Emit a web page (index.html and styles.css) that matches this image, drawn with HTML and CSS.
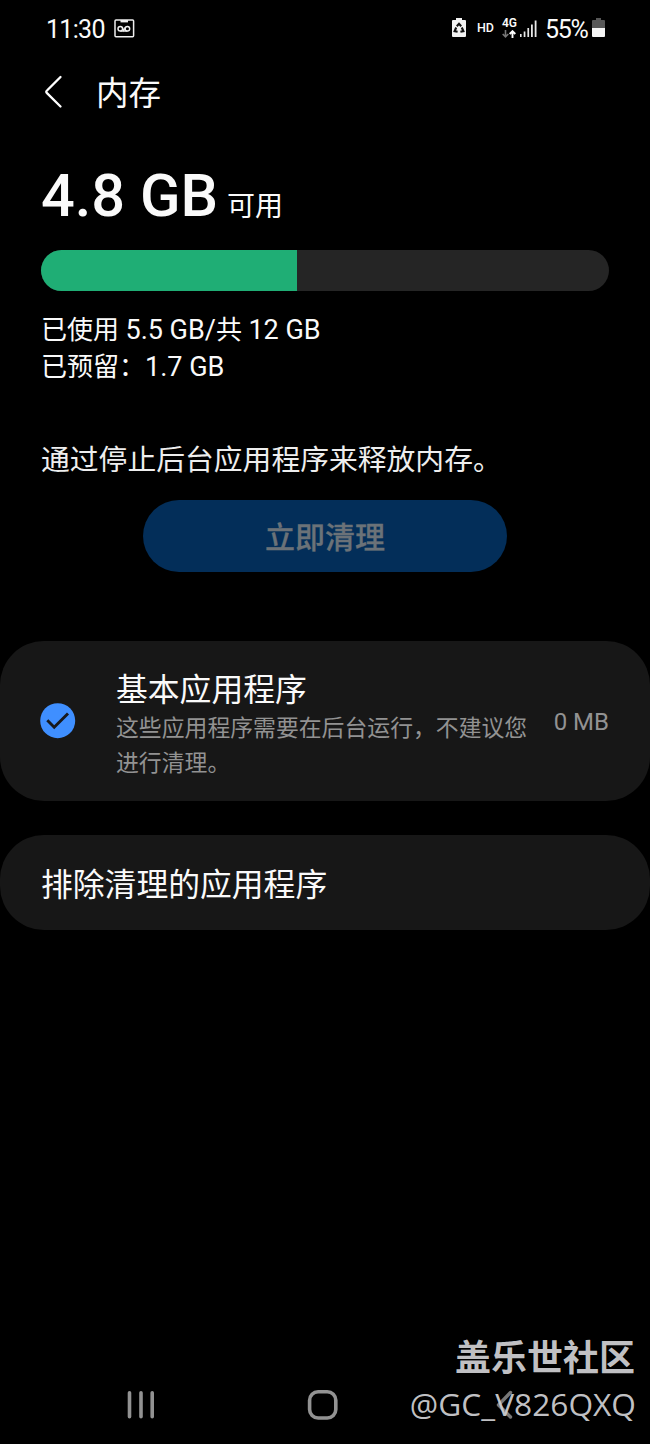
FILE: index.html
```html
<!DOCTYPE html>
<html lang="zh-CN">
<head>
<meta charset="utf-8">
<title>内存</title>
<link rel="stylesheet" href="styles.css">
</head>
<body>
<div class="screen">
  <header class="status">
    <div class="status-left">
      <span class="clock">11:30</span>
      <svg class="voicemail" width="22" height="20" viewBox="0 0 22 20" fill="none" stroke="#eee" stroke-width="1.5">
        <rect x="1" y="1" width="18.6" height="16.8" rx="1"/>
        <path d="M6.500 2.200h7.500" stroke-width="2.400"/>
        <circle cx="6.300" cy="9.800" r="2.300"/><circle cx="13.400" cy="9.800" r="2.300"/>
        <path d="M6.300 12.100h7.100M8.300 8.200l1.500 3.500 1.500-3.500" stroke-width="1.200"/>
      </svg>
    </div>
    <div class="status-right">
      <svg class="recycle" width="14" height="20" viewBox="0 0 14 20">
        <path d="M4 0h6v2h3q1 0 1 1v15q0 1-1 1H1q-1 0-1-1V3q0-1 1-1h3z" fill="#f2f2f2"/>
        <path d="M4.800 8.300 7 5.800l2.200 2.500M9.800 9.500l1.600 3.800-3 .5M5.600 13.800l-3-.5 1.600-3.800" fill="none" stroke="#111" stroke-width="2.100"/>
      </svg>
      <span class="hd">HD</span>
      <span class="network">
        <span class="gen">4G</span>
        <svg width="14" height="8" viewBox="0 0 14 8" fill="none" stroke-width="1.6">
          <path d="M3.5 0v7M.7 4l2.8 2.8L6.3 4" stroke="#777"/>
          <path d="M10.5 8V1M7.7 4l2.8-2.8L13.3 4" stroke="#fff" stroke-width="1.9"/>
        </svg>
      </span>
      <svg class="signal" width="17" height="18" viewBox="0 0 17 18" fill="#e8e8e8">
        <path d="M0 14h1.6v3H0zM3.7 11.5h1.7V17H3.7zM7.4 8h1.7v9H7.4zM11 4.5h1.8V17H11zM14.7.5h1.8V17h-1.8z"/>
      </svg>
      <span class="percent">55%</span>
      <svg class="battery" width="13" height="20" viewBox="0 0 13 20">
        <path d="M4 0h5v2h3q1 0 1 1v7H0V3q0-1 1-1h3z" fill="#575757"/>
        <path d="M0 10h13v8q0 1-1 1H1q-1 0-1-1z" fill="#f4f4f4"/>
      </svg>
    </div>
  </header>

  <nav class="titlebar">
    <svg width="20" height="34" viewBox="0 0 20 34" fill="none" stroke="#fff" stroke-width="2.3" stroke-linecap="round" stroke-linejoin="round">
      <path d="M16.500 2 3 15.500q-1.500 1.300 0 2.600l13.500 13.400"/>
    </svg>
    <h1 class="title">内存</h1>
  </nav>

  <main class="content">
    <section class="memory">
      <div class="available"><span class="amount">4.8 GB</span><span class="unit-label">可用</span></div>
      <div class="bar"><div class="bar-fill" style="width:45%"></div></div>
      <p class="usage">已使用 <span class="num">5.5 GB/</span>共 <span class="num">12 GB</span></p>
      <p class="usage">已预留：<span class="num">1.7 GB</span></p>
      <p class="hint">通过停止后台应用程序来释放内存。</p>
      <button class="clean" disabled>立即清理</button>
    </section>

    <section class="card apps">
      <svg class="check" width="36" height="36" viewBox="0 0 36 36">
        <circle cx="17.700" cy="17.700" r="17.500" fill="#3f8fff"/>
        <path d="m7.300 17.300 6.900 6.900L28 10.500" fill="none" stroke="#17191d" stroke-width="2.900"/>
      </svg>
      <div class="apps-text">
        <h2 class="card-title">基本应用程序</h2>
        <p class="card-sub">这些应用程序需要在后台运行，不建议您进行清理。</p>
      </div>
      <span class="size">0 MB</span>
    </section>

    <section class="card excluded">
      <h2 class="card-title">排除清理的应用程序</h2>
    </section>
  </main>

  <footer class="navbar">
    <svg width="28" height="30" viewBox="0 0 28 30" stroke="#929292" stroke-width="3.600" stroke-linecap="round">
      <path d="M2.500 2.700v24M14 2.700v24M25.200 2.700v24"/>
    </svg>
    <svg class="home" width="32" height="32" viewBox="0 0 32 32" fill="none" stroke="#929292" stroke-width="3.600">
      <rect x="2.600" y="1.800" width="26.200" height="26.200" rx="8.500"/>
    </svg>
    <svg width="18" height="30" viewBox="0 0 18 30" fill="none" stroke="#777" stroke-width="3.400" stroke-linecap="round" stroke-linejoin="round">
      <path d="M14.500 2.500 2.500 15l12 12"/>
    </svg>
  </footer>
  <div class="watermark">
    <div class="mark-name">盖乐世社区</div>
    <div class="mark-user">@GC_V826QXQ</div>
  </div>
</div>
</body>
</html>
```
FILE: styles.css
```css
* { box-sizing: border-box; }
body { margin: 0; background: #000; }
h1, h2, p { margin: 0; font-weight: 400; }
svg { display: block; flex: none; }

.screen {
  position: relative;
  display: flex;
  flex-direction: column;
  width: 650px;
  height: 1444px;
  overflow: hidden;
  color: #fafafa;
  background: #000;
  font-family: Roboto, "Noto Sans CJK SC", sans-serif;
  white-space: nowrap;
}

.status {
  display: flex;
  justify-content: space-between;
  height: 56px;
  padding: 14px 45px 0 46px;
  line-height: 32px;
}
.status-left, .status-right { display: flex; align-items: flex-start; }
.clock { width: 68px; font-size: 25px; letter-spacing: -0.7px; }
.voicemail { margin-top: 5px; }
.recycle { margin-top: 4px; }
.hd { width: 25px; margin-left: 11px; font-size: 12.500px; font-weight: 500; line-height: 28px; }
.network { display: flex; flex-direction: column; width: 18px; padding-top: 3px; }
.gen { height: 13px; font-size: 12px; font-weight: 600; line-height: 13px; }
.signal { margin-top: 6px; }
.percent { width: 47px; margin-left: 8px; font-size: 25px; letter-spacing: -1.3px; }
.battery { margin-top: 4px; }

.titlebar { display: flex; height: 112px; padding: 19px 0 0 44px; }
.title { margin: 1px 0 0 32px; font-size: 32.500px; line-height: 37px; }

.memory { display: flex; flex-direction: column; height: 473px; padding: 0 41px; }
.available { display: flex; align-items: baseline; height: 82px; line-height: 56px; }
.amount { width: 186px; font-size: 59.500px; font-weight: 500; }
.unit-label { font-size: 28px; }
.bar { height: 41px; margin-bottom: 21px; border-radius: 21px; background: #252525; overflow: hidden; }
.bar-fill { height: 100%; background: #1fae75; }
.usage { font-size: 26px; line-height: 37px; }
.num { font-size: 27px; line-height: 1; }
.hint { margin-top: 54px; color: #eee; font-size: 28.800px; line-height: 40px; }
.clean {
  width: 364px;
  height: 72px;
  margin: 20px 0 0 102px;
  padding: 3px 0 0;
  border: 0;
  border-radius: 36px;
  color: #6b7278;
  background: #032e59;
  font: 500 30px/69px Roboto, "Noto Sans CJK SC", sans-serif;
  -webkit-text-stroke: .3px #6b7278;
}

.card { display: flex; background: #171717; border-radius: 44px; }
.apps { height: 160px; padding: 0 41px 0 40px; align-items: center; }
.apps-text { width: 414px; margin: 9px 0 0 40px; }
.card-title { font-size: 31.800px; line-height: 40px; }
.card-sub { margin-top: 1px; color: #929292; font-size: 22.850px; line-height: 35px; white-space: normal; }
.size { margin: 2px 0 0 auto; color: #929292; font-size: 24px; }
.excluded { height: 95px; margin-top: 34px; padding: 5px 41px 0; align-items: center; }

.navbar {
  display: flex;
  margin-top: auto;
  height: 54px;
  padding: 0 0 0 127px;
}
.home { margin: 0 157px 0 152px; }

/* Signature laid over the lower corner of the screen */
.watermark {
  position: absolute;
  right: 14px;
  bottom: 18px;
  color: rgba(205, 205, 208, .94);
  text-align: right;
}
.mark-name { margin: 0 1px 2px 0; font: 700 36px/48px "Noto Sans CJK SC", sans-serif; }
.mark-user { font: 400 31.700px/45px "Open Sans", "Noto Sans", sans-serif; }
```
